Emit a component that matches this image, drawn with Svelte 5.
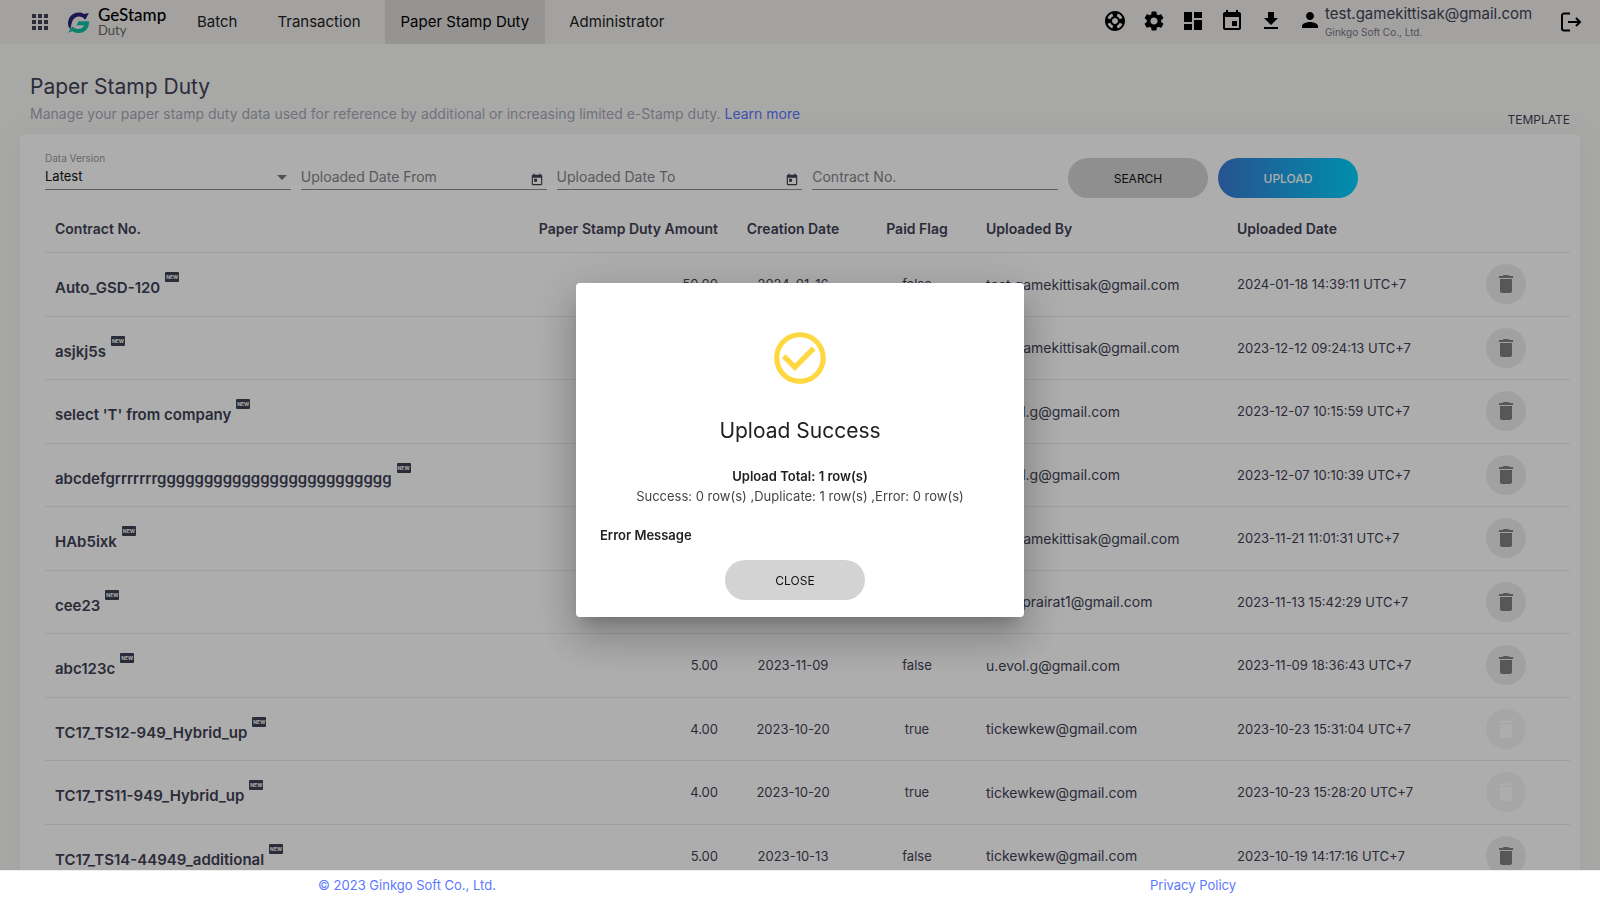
<script>
  const tabs = ['Batch', 'Transaction', 'Paper Stamp Duty', 'Administrator'];
  const activeTab = 'Paper Stamp Duty';

  const tools = [
    { label: 'Support', d: 'M12 2C6.48 2 2 6.48 2 12s4.48 10 10 10 10-4.48 10-10S17.52 2 12 2zm7.46 7.12l-2.78 1.15c-.51-1.36-1.58-2.44-2.95-2.94l1.15-2.78c2.1.8 3.77 2.47 4.58 4.57zM12 15c-1.66 0-3-1.34-3-3s1.34-3 3-3 3 1.34 3 3-1.34 3-3 3zM9.13 4.54l1.17 2.78c-1.38.5-2.47 1.59-2.98 2.97L4.54 9.13c.81-2.11 2.48-3.78 4.59-4.59zM4.54 14.87l2.78-1.15c.51 1.38 1.59 2.46 2.97 2.96l-1.17 2.78c-2.1-.81-3.77-2.48-4.58-4.59zm10.34 4.59l-1.15-2.78c1.37-.51 2.45-1.59 2.95-2.97l2.78 1.17c-.81 2.1-2.48 3.77-4.58 4.58z' },
    { label: 'Settings', d: 'M19.14 12.94c.04-.3.06-.61.06-.94 0-.32-.02-.64-.07-.94l2.03-1.58c.18-.14.23-.41.12-.61l-1.92-3.32c-.12-.22-.37-.29-.59-.22l-2.39.96c-.5-.38-1.03-.7-1.62-.94l-.36-2.54c-.04-.24-.24-.41-.48-.41h-3.84c-.24 0-.43.17-.47.41l-.36 2.54c-.59.24-1.13.57-1.62.94l-2.39-.96c-.22-.08-.47 0-.59.22L2.74 8.87c-.12.21-.08.47.12.61l2.03 1.58c-.05.3-.09.63-.09.94s.02.64.07.94l-2.03 1.58c-.18.14-.23.41-.12.61l1.92 3.32c.12.22.37.29.59.22l2.39-.96c.5.38 1.03.7 1.62.94l.36 2.54c.05.24.24.41.48.41h3.84c.24 0 .44-.17.47-.41l.36-2.54c.59-.24 1.13-.56 1.62-.94l2.39.96c.22.08.47 0 .59-.22l1.92-3.32c.12-.22.07-.47-.12-.61l-2.01-1.58zM12 15.6c-1.98 0-3.6-1.62-3.6-3.6s1.62-3.6 3.6-3.6 3.6 1.62 3.6 3.6-1.62 3.6-3.6 3.6z' },
    { label: 'Dashboard', d: 'M3 13h8V3H3v10zm0 8h8v-6H3v6zm10 0h8V11h-8v10zm0-18v6h8V3h-8z' },
    { label: 'Calendar', d: 'M17 12h-5v5h5v-5zM16 1v2H8V1H6v2H5c-1.11 0-1.99.9-1.99 2L3 19c0 1.1.89 2 2 2h14c1.1 0 2-.9 2-2V5c0-1.1-.9-2-2-2h-1V1h-2zm3 18H5V8h14v11z' },
    { label: 'Downloads', d: 'M19 9h-4V3H9v6H5l7 7 7-7zM5 18v2h14v-2H5z' }
  ];

  const rows = [
    ['Auto_GSD-120', '50.00', '2024-01-16', 'false', 'test.gamekittisak@gmail.com', '2024-01-18 14:39:11 UTC+7', true],
    ['asjkj5s', '5.00', '2023-12-12', 'false', 'test.gamekittisak@gmail.com', '2023-12-12 09:24:13 UTC+7', true],
    ["select 'T' from company", '5.00', '2023-12-07', 'false', 'u.evol.g@gmail.com', '2023-12-07 10:15:59 UTC+7', true],
    ['abcdefgrrrrrrrggggggggggggggggggggggggg', '5.00', '2023-12-07', 'false', 'u.evol.g@gmail.com', '2023-12-07 10:10:39 UTC+7', true],
    ['HAb5ixk', '5.00', '2023-11-21', 'false', 'test.gamekittisak@gmail.com', '2023-11-21 11:01:31 UTC+7', true],
    ['cee23', '5.00', '2023-11-13', 'false', 'siran.prairat1@gmail.com', '2023-11-13 15:42:29 UTC+7', true],
    ['abc123c', '5.00', '2023-11-09', 'false', 'u.evol.g@gmail.com', '2023-11-09 18:36:43 UTC+7', true],
    ['TC17_TS12-949_Hybrid_up', '4.00', '2023-10-20', 'true', 'tickewkew@gmail.com', '2023-10-23 15:31:04 UTC+7', false],
    ['TC17_TS11-949_Hybrid_up', '4.00', '2023-10-20', 'true', 'tickewkew@gmail.com', '2023-10-23 15:28:20 UTC+7', false],
    ['TC17_TS14-44949_additional', '5.00', '2023-10-13', 'false', 'tickewkew@gmail.com', '2023-10-19 14:17:16 UTC+7', true]
  ];

  let open = $state(true);
</script>

{#snippet today()}
  <svg class="today" viewBox="0 0 24 24" aria-hidden="true"><path d="M19 3h-1V1h-2v2H8V1H6v2H5c-1.11 0-1.99.9-1.99 2L3 19c0 1.1.89 2 2 2h14c1.1 0 2-.9 2-2V5c0-1.1-.9-2-2-2zm0 16H5V8h14v11zM7 10h5v5H7z" /></svg>
{/snippet}

<div class="page">
  <header>
    <button class="icon apps" aria-label="Apps">
      <svg viewBox="0 0 24 24"><path d="M4 8h4V4H4v4zm6 12h4v-4h-4v4zm-6 0h4v-4H4v4zm0-6h4v-4H4v4zm6 0h4v-4h-4v4zm6-10v4h4V4h-4zm-6 4h4V4h-4v4zm6 6h4v-4h-4v4zm0 6h4v-4h-4v4z" /></svg>
    </button>
    <a class="logo" href="#home">
      <svg viewBox="0 0 24 24" aria-hidden="true">
        <path fill="#272378" d="M3.6 19.2C1 16.700 .5 12.800 1.600 9.400 3.200 4.600 7.300 1.600 12 1.600c2.200 0 4 .5 5.600 1.500L22.800 2l-3.700 7.200-3-2.700C12.400 4.600 8 6 6 9.600c-1.500 2.900-1.700 6.300-2.400 9.600z" />
        <path fill="#13bfa8" d="M12 10.600h11c.3 3.900-1 7.400-3.600 9.700-3.900 3.300-9.700 3.400-13.700.7L1 22.800l4.600-6.500c2.600 2.500 6.200 3.400 9.300 1.800 1.300-.7 2.200-1.700 2.700-3.100H10l2-4.400z" />
      </svg>
      <span class="brand"><strong>GeStamp</strong><span>Duty</span></span>
    </a>
    <nav>
      {#each tabs as tab}
        <a href="#{tab}" class:active={tab === activeTab}>{tab}</a>
      {/each}
    </nav>
    <div class="tools">
      {#each tools as tool}
        <button class="icon" aria-label={tool.label}><svg viewBox="0 0 24 24"><path d={tool.d} /></svg></button>
      {/each}
    </div>
    <div class="user">
      <svg viewBox="0 0 24 24" aria-hidden="true"><path d="M12 12c2.210 0 4-1.790 4-4s-1.790-4-4-4-4 1.790-4 4 1.790 4 4 4zm0 2c-2.670 0-8 1.340-8 4v2h16v-2c0-2.660-5.330-4-8-4z" /></svg>
      <div class="who"><span>test.gamekittisak@gmail.com</span><small>Ginkgo Soft Co., Ltd.</small></div>
    </div>
    <button class="icon logout" aria-label="Log out">
      <svg viewBox="0 0 24 24"><path fill="none" stroke="#000" stroke-width="2" d="M11 3.500H5a2 2 0 0 0-2 2v13a2 2 0 0 0 2 2h6M9 12h12M17 8l4 4-4 4" /></svg>
    </button>
  </header>

  <main>
    <div class="heading">
      <div>
        <h1>Paper Stamp Duty</h1>
        <p>Manage your paper stamp duty data used for reference by additional or increasing limited e-Stamp duty. <a href="#learn">Learn more</a></p>
      </div>
      <button class="template">TEMPLATE</button>
    </div>

    <section class="card">
      <form class="filters" onsubmit={(e) => e.preventDefault()}>
        <div class="field">
          <label for="version">Data Version</label>
          <select id="version"><option>Latest</option></select>
          <svg class="caret" viewBox="0 0 10 5" aria-hidden="true"><path d="M0 0h10L5 5z" /></svg>
        </div>
        <div class="field"><input aria-label="Uploaded Date From" placeholder="Uploaded Date From" />{@render today()}</div>
        <div class="field"><input aria-label="Uploaded Date To" placeholder="Uploaded Date To" />{@render today()}</div>
        <div class="field"><input aria-label="Contract No." placeholder="Contract No." /></div>
        <button class="pill">SEARCH</button>
        <button class="pill primary" type="button">UPLOAD</button>
      </form>

      <table>
        <colgroup><col /><col class="c-amount" /><col class="c-created" /><col class="c-flag" /><col class="c-by" /><col class="c-date" /><col class="c-del" /></colgroup>
        <thead>
          <tr>
            <th>Contract No.</th>
            <th class="right">Paper Stamp Duty Amount</th>
            <th class="center">Creation Date</th>
            <th class="center">Paid Flag</th>
            <th>Uploaded By</th>
            <th>Uploaded Date</th>
            <th aria-label="Delete"></th>
          </tr>
        </thead>
        <tbody>
          {#each rows as [no, amount, created, flag, by, date, removable]}
            <tr>
              <td class="no"><div><span>{no}</span><span class="new">NEW</span></div></td>
              <td class="right">{amount}</td>
              <td class="center">{created}</td>
              <td class="center">{flag}</td>
              <td class="by">{by}</td>
              <td>{date}</td>
              <td class="del">
                <button class="trash" disabled={!removable} aria-label="Delete {no}">
                  <svg viewBox="0 0 24 24"><path d="M6 19c0 1.100.9 2 2 2h8c1.100 0 2-.9 2-2V7H6v12zM19 4h-3.500l-1-1h-5l-1 1H5v2h14V4z" /></svg>
                </button>
              </td>
            </tr>
          {/each}
        </tbody>
      </table>
    </section>
  </main>

  <footer>
    <a href="#company">© 2023 Ginkgo Soft Co., Ltd.</a>
    <a href="#privacy">Privacy Policy</a>
  </footer>

  {#if open}
    <div class="backdrop">
      <div class="dialog" role="dialog" aria-modal="true" aria-labelledby="dialog-title">
        <svg class="check" viewBox="0 0 24 24" aria-hidden="true"><path d="M16.590 7.580L10 14.170l-3.590-3.580L5 12l5 5 8-8zM12 2C6.480 2 2 6.480 2 12s4.480 10 10 10 10-4.480 10-10S17.520 2 12 2zm0 18c-4.420 0-8-3.580-8-8s3.580-8 8-8 8 3.580 8 8-3.580 8-8 8z" /></svg>
        <h2 id="dialog-title">Upload Success</h2>
        <strong>Upload Total: 1 row(s)</strong>
        <p>Success: 0 row(s) ,Duplicate: 1 row(s) ,Error: 0 row(s)</p>
        <h3>Error Message</h3>
        <button class="pill" onclick={() => (open = false)}>CLOSE</button>
      </div>
    </div>
  {/if}
</div>

<style>
  :global(body) { margin: 0; }
  .page {
    height: 100vh;
    display: flex;
    flex-direction: column;
    overflow: hidden;
    background: #f8f8f5;
    color: #3f4254;
    font: 13px/20px Inter, "Open Sans", sans-serif;
  }
  .page * { box-sizing: border-box; }
  button { font: inherit; color: inherit; border: 0; padding: 0; background: none; cursor: pointer; }
  a { color: #5d78ff; text-decoration: none; }

  header {
    flex: none;
    height: 44px;
    display: flex;
    align-items: center;
    padding: 0 17px 0 28px;
    background: #f1efec;
  }
  .icon { width: 24px; height: 24px; display: block; }
  .icon svg { display: block; width: 24px; height: 24px; }
  .apps { fill: #3f4254; }
  .logo { display: flex; align-items: center; gap: 8px; margin-left: 15px; width: 114px; color: #000; }
  .logo svg { width: 23px; height: 23px; }
  .brand { display: flex; flex-direction: column; font-family: Lato, sans-serif; font-size: 13px; line-height: 14px; color: #666; }
  .brand strong { font-size: 17px; line-height: 16px; font-weight: 500; color: #000; }
  nav { display: flex; gap: 8px; align-self: stretch; flex: 1; }
  nav a { padding: 0 16px; font-size: 15px; line-height: 44px; color: #222; white-space: nowrap; }
  nav a.active { background: #dedbd8; color: #000; }
  .tools { display: flex; gap: 15px; margin-bottom: 2px; }
  .user { display: flex; gap: 3px; margin-left: 15px; width: 261px; }
  .user svg { width: 24px; height: 24px; margin-top: 4px; }
  .who { display: flex; flex-direction: column; white-space: nowrap; }
  .who span { font-size: 15px; line-height: 20px; }
  .who small { font-size: 10px; line-height: 16px; color: #74748a; }

  main { flex: 1; min-height: 0; overflow: hidden; padding: 29px 20px 0; }
  .heading { display: flex; justify-content: space-between; align-items: flex-end; height: 61px; padding: 0 10px; }
  .heading > div { align-self: flex-start; }
  h1 { margin: 0; font-size: 21px; line-height: 28px; font-weight: 400; }
  p { margin: 3px 0 0; color: #a7a8b8; }
  .heading p { font-size: 14px; }
  .template { margin-bottom: 4px; font-size: 12px; }

  .card { background: #fff; border-radius: 6px; padding: 24px 10px 24px 25px; box-shadow: 0 0 30px rgba(82, 63, 105, 0.06); }
  .filters { display: flex; gap: 10px; padding-right: 212px; }
  .field { position: relative; flex: 1; min-width: 0; height: 32px; display: flex; align-items: flex-end; border-bottom: 1px solid #8c8c90; }
  .field label { position: absolute; top: -8px; left: 0; font-size: 10px; line-height: 16px; color: #999; }
  .field input, .field select {
    appearance: none;
    width: 100%;
    min-width: 0;
    height: 24px;
    padding: 0;
    border: 0;
    outline: 0;
    background: none;
    font: inherit;
    font-size: 14px;
    color: #111;
    margin: 0 0 1px;
  }
  .field select { font-size: 13px; }
  .field input::placeholder { color: #858589; opacity: 1; }
  .caret { position: absolute; right: 4px; bottom: 9px; width: 10px; height: 5px; fill: #777; }
  .today { flex: none; width: 14px; height: 14px; margin: 0 3px 2px; fill: #3f4254; }
  .pill { flex: none; width: 140px; height: 40px; border-radius: 20px; background: #d3d3d3; color: #111; font-size: 12px; line-height: 40px; padding-top: 1px; }
  .primary { background: linear-gradient(90deg, #3a7bd5, #00d2ff); color: #fff; font-weight: 500; }

  table { width: 100%; margin-top: 8px; border-collapse: separate; border-spacing: 0; table-layout: fixed; }
  .c-amount { width: 220px; }
  .c-created { width: 130px; }
  .c-flag { width: 118px; }
  .c-by { width: 251px; }
  .c-date { width: 249px; }
  .c-del { width: 94px; }
  th { height: 47px; padding: 0 10px; text-align: left; font-size: 14px; font-weight: 600; white-space: nowrap; border-bottom: 1px solid #ebebee; }
  td { padding: 22px 10px 21px; line-height: 1.5; white-space: nowrap; border-bottom: 1px solid #ebebee; }
  .right { text-align: right; }
  .center { text-align: center; }
  td.by { padding: 20px 10px; font-size: 14px; }
  td.no { padding: 15px 10px 7px; font-size: 15px; font-weight: 600; }
  td.no div { display: flex; align-items: center; gap: 5px; }
  .new { width: 14px; height: 10px; margin-bottom: 22px; border-radius: 1px; background: #3f4254; color: #fff; font-size: 5px; line-height: 10px; font-weight: 700; text-align: center; }
  td.del { padding: 0 10px; }
  .trash { display: flex; align-items: center; justify-content: center; width: 40px; height: 40px; border-radius: 50%; background: #eee; fill: #808080; }
  .trash svg { width: 24px; height: 24px; }
  .trash:disabled { background: #f5f5f5; fill: #fff; }

  footer {
    position: relative;
    z-index: 2;
    flex: none;
    height: 30px;
    display: grid;
    grid-template-columns: 1fr 1fr;
    align-items: center;
    padding: 0 14px 1px;
    text-align: center;
    background: #fff;
    border-top: 1px solid #eee;
  }

  .backdrop { position: fixed; inset: 0; z-index: 1; display: flex; align-items: center; justify-content: center; background: rgba(0, 0, 0, 0.32); }
  .dialog {
    width: 448px;
    display: flex;
    flex-direction: column;
    align-items: center;
    padding: 44px 24px 17px;
    border-radius: 4px;
    background: #fff;
    color: #212121;
    box-shadow: 0 11px 15px -7px rgba(0, 0, 0, 0.2), 0 24px 38px 3px rgba(0, 0, 0, 0.14), 0 9px 46px 8px rgba(0, 0, 0, 0.12);
  }
  .check { width: 62px; height: 62px; fill: #ffd740; }
  h2 { margin: 28px 0 21px; font-size: 21px; line-height: 28px; font-weight: 400; }
  .dialog strong { font-weight: 600; }
  .dialog p { margin: 0; color: #444; }
  h3 { align-self: flex-start; margin: 19px 0 15px; font-size: 13px; line-height: 20px; font-weight: 600; }
  .dialog .pill { margin-right: 10px; }
</style>
